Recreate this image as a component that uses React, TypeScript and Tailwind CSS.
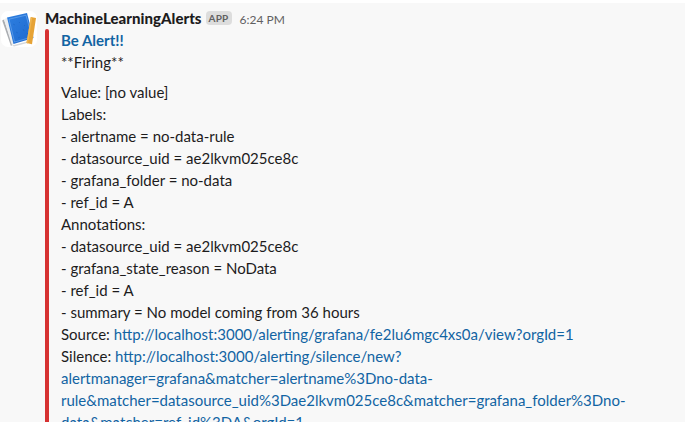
const lines = ["Value: [no value]", "Labels:", "- alertname = no-data-rule", "- datasource_uid = ae2lkvm025ce8c", "- grafana_folder = no-data", "- ref_id = A", "Annotations:", "- datasource_uid = ae2lkvm025ce8c", "- grafana_state_reason = NoData", "- ref_id = A", "- summary = No model coming from 36 hours"];

function Avatar() {
  return (
    <svg width="36" height="36" viewBox="0 0 36 36" className="ml-px">
      <defs>
        <linearGradient id="cover" x1="0" y1="0" x2="1" y2="1">
          <stop offset="0" stopColor="#2f80e0" />
          <stop offset="1" stopColor="#1c68cf" />
        </linearGradient>
      </defs>
      <rect width="36" height="36" rx="7" fill="#fff" />
      <path d="M11 34.500 30 29.500v1.500l-17 4.500Z" fill="#d5d7da" />
      <path d="M1.200 9.500 3 8.500 11.500 33.500 10 35Z" fill="#aaadb1" />
      <path d="M3 8.500 6 6.500 13 33 11 34.500Z" fill="#eceef0" />
      <path d="M6 6.500 26 2 32.500 27 12.500 33Z" fill="url(#cover)" />
      <path d="M8 8.200 25 4.200 31 26 13.500 31Z" fill="none" stroke="#7db3f2" strokeWidth="0.55" />
      <path d="M12 13l2 1m4-3 1 1m4 2 1 1m-9 6 2 1m5-4 1 2m3 2 1 1m-10 4 2-1" stroke="#1559b5" strokeWidth="0.6" strokeOpacity="0.6" />
      <path d="M29.800 6 35 7 31 33.300 25.500 32Z" fill="#e6a336" />
      <path d="M29.800 6 31.300 6.300 27 32.400 25.500 32Z" fill="#efb550" />
    </svg>
  );
}

export default function App() {
  return (
    <div className="h-[422px] w-[685px] overflow-hidden bg-white pt-[3px] font-['Lato',sans-serif] text-[15px] leading-[22px] text-[#1d1c1d]">
      <div className="flex h-[419px] bg-[#f8f8f8]">
        <div className="w-[45px] shrink-0 pt-[8px]"><Avatar /></div>
        <div className="flex min-w-0 flex-1 flex-col pt-1">
          <div className="flex h-[22px] items-start">
            <span className="font-black tracking-[0.03px]">MachineLearningAlerts</span>
            <span className="ml-1 mt-1 h-[14px] w-[26px] rounded-sm bg-[#dddddd] text-center text-[10px] font-bold leading-[14px] tracking-[0.2px] text-[#616061]">APP</span>
            <span className="ml-2 mt-[2px] text-xs leading-[22px] text-[#616061]">6:24 PM</span>
          </div>
          <div className="flex flex-1">
            <div className="w-1 shrink-0 rounded-t-lg bg-[#d63232]" />
            <div className="ml-3 w-[580px]">
              <div className="font-bold text-[#1264a3]">Be Alert!!</div>
              <div className="mb-2">**Firing**</div>
              {lines.map((line, i) => <div key={i}>{line}</div>)}
              <div>Source: <span className="text-[#1264a3]">http://localhost:3000/alerting/grafana/fe2lu6mgc4xs0a/view?orgId=1</span></div>
              <div>Silence: <span className="text-[#1264a3]">http://localhost:3000/alerting/silence/new?<br />alertmanager=grafana&amp;matcher=alertname%3Dno-data-<br />rule&amp;matcher=datasource_uid%3Dae2lkvm025ce8c&amp;matcher=grafana_folder%3Dno-<br />data&amp;matcher=ref_id%3DA&amp;orgId=1</span></div>
            </div>
          </div>
        </div>
      </div>
    </div>
  );
}
